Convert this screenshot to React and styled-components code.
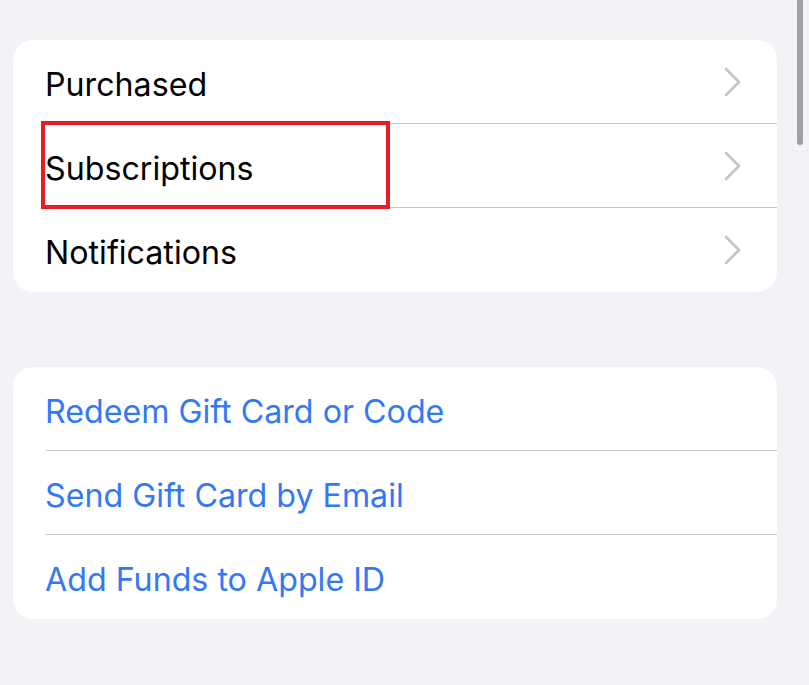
import React from "react";
import styled, { createGlobalStyle } from "styled-components";

const Global = createGlobalStyle`
  html, body { margin: 0; padding: 0; background: #f2f2f7; }
  body { font-family: Inter, "Liberation Sans", sans-serif; overflow: hidden; }
`;

const Page = styled.div`
  position: relative;
  width: 809px;
  height: 685px;
  background: #f2f2f7;
  padding: 40px 32px 0 13px;
  box-sizing: border-box;
  display: flex;
  flex-direction: column;
  gap: 75px;
`;

const Card = styled.div`
  position: relative;
  background: #fff;
  border-radius: 20px;
  display: flex;
  flex-direction: column;
  overflow: hidden;
`;

const Row = styled.div`
  position: relative;
  height: 84px;
  display: flex;
  align-items: center;
  padding: 0 35px 0 32px;
  box-sizing: border-box;
  &:not(:last-child)::after {
    content: "";
    position: absolute;
    left: 33px;
    right: 0;
    bottom: 0;
    height: 1px;
    background: #c6c6c8;
  }
`;

const Label = styled.span`
  flex: 1;
  font-size: 32.2px;
  padding-top: 5px;
  color: ${(p) => (p.$link ? "#3478f6" : "#000")};
`;

const Highlight = styled.div`
  position: absolute;
  left: 28px;
  top: -3px;
  width: 349px;
  height: 88px;
  border: 4px solid #e41e26;
  box-sizing: border-box;
  z-index: 2;
`;

const Scrollbar = styled.div`
  position: absolute;
  right: 6px;
  top: 0;
  width: 6px;
  height: 145px;
  border-radius: 0 0 3px 3px;
  background: #a1a1a4;
`;

const Chevron = () => (
  <svg width="18" height="30" viewBox="0 0 18 30" fill="none">
    <path d="M2 2 L15 15 L2 28" stroke="#c4c4c7" strokeWidth="2.6" strokeLinecap="round" strokeLinejoin="round" />
  </svg>
);

export default function App() {
  return (
    <>
      <Global />
      <Page>
        <Card>
          <Row>
            <Label>Purchased</Label>
            <Chevron />
          </Row>
          <Row>
            <Highlight />
            <Label>Subscriptions</Label>
            <Chevron />
          </Row>
          <Row>
            <Label>Notifications</Label>
            <Chevron />
          </Row>
        </Card>
        <Card>
          <Row>
            <Label $link>Redeem Gift Card or Code</Label>
          </Row>
          <Row>
            <Label $link>Send Gift Card by Email</Label>
          </Row>
          <Row>
            <Label $link>Add Funds to Apple ID</Label>
          </Row>
        </Card>
        <Scrollbar />
      </Page>
    </>
  );
}
